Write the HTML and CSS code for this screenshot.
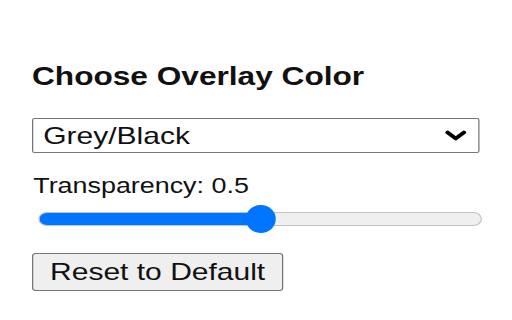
FILE: index.html
```html
<!DOCTYPE html>
<html lang="en">
<head>
    <meta charset="UTF-8">
    <meta name="viewport" content="width=device-width, initial-scale=1.0">
    <title>Overlay Settings</title>
    <link rel="stylesheet" href="styles.css">
</head>
<body>
    <div class="popup">
        <h3>Choose Overlay Color</h3>
        <select id="colorSelect">
            <option value="grey">Grey/Black</option>
            <option value="blue">Blue</option>
            <option value="sepia">Sepia</option>
        </select>
        <label for="opacity">Transparency: <span id="opacityValue">0.5</span></label>
        <input type="range" id="opacity" min="0" max="1" step="0.1" value="0.5">
        <button id="resetBtn">Reset to Default</button>
    </div>
</body>
</html>
```
FILE: styles.css
```css
body {
    margin: 0;
    padding: 62px 0 0 32px;
    background: #fff;
    font-family: "Liberation Sans", Arial, sans-serif;
    color: #000;
}
/* popup was captured stretched sideways */
.popup {
    width: 358px;
    transform: scaleX(1.25);
    transform-origin: 0 0;
}
.popup h3 {
    margin: 0;
    font-size: 25.3px;
    line-height: 28px;
    font-weight: bold;
    color: #111;
}
.popup select {
    display: block;
    width: 100%;
    height: 35px;
    margin-top: 28px;
    padding: 0 30px 0 8px;
    box-sizing: border-box;
    font-family: inherit;
    font-size: 24px;
    color: #111;
    border: 1px solid #767676;
    border-radius: 2px;
    background: #fff url("data:image/svg+xml;utf8,<svg xmlns='http://www.w3.org/2000/svg' viewBox='0 0 18 11'><path d='M2.5 2.5 L9 8.5 L15.5 2.5' fill='none' stroke='black' stroke-width='3.6' stroke-linecap='round' stroke-linejoin='round'/></svg>") no-repeat right 9px center / 18px 11px;
    -webkit-appearance: none;
    appearance: none;
}
.popup label {
    display: block;
    margin-top: 22px;
    padding-left: 1px;
    font-size: 21.5px;
    line-height: 23px;
    color: #111;
}
.popup input[type="range"] {
    display: block;
    width: 355px;
    height: 28px;
    margin: 7px 0 0 5px;
    padding: 0;
    background: transparent;
    -webkit-appearance: none;
    appearance: none;
}
.popup input[type="range"]::-webkit-slider-runnable-track {
    height: 14px;
    box-sizing: border-box;
    border: 1px solid #c2c2c2;
    border-radius: 7px;
    background: linear-gradient(to right, #0075ff 50%, #efefef 50%);
}
.popup input[type="range"]::-webkit-slider-thumb {
    -webkit-appearance: none;
    width: 24px;
    height: 28px;
    margin-top: -8px;
    border: none;
    border-radius: 50%;
    background: #0075ff;
}
.popup button {
    display: block;
    width: 201px;
    height: 38px;
    margin-top: 20px;
    padding: 0;
    font-family: inherit;
    font-size: 24px;
    color: #111;
    background: #efefef;
    border: 1px solid #767676;
    border-radius: 3px;
}
```
